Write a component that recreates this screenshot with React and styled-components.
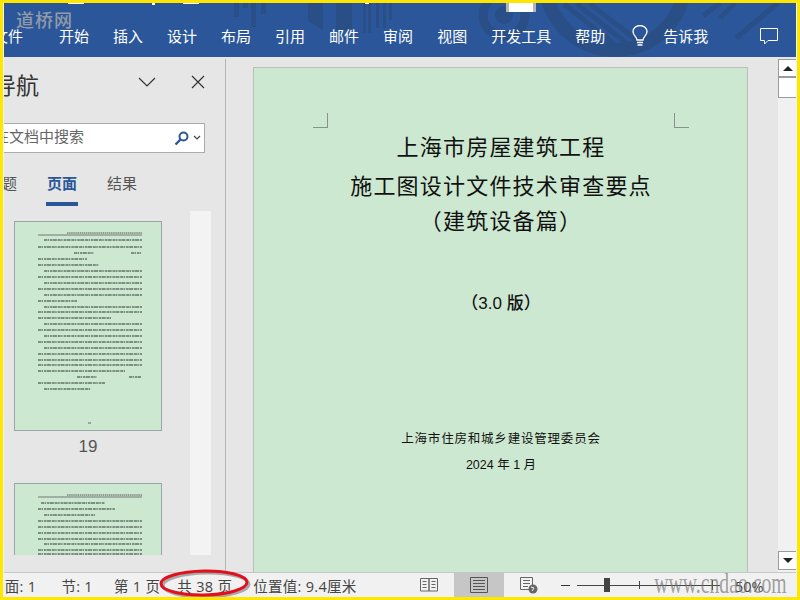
import React from 'react';
import styled, { createGlobalStyle } from 'styled-components';

const CJK = '"Noto Sans CJK SC", "Liberation Sans", sans-serif';
const UI = '"Liberation Sans", "Noto Sans CJK SC", sans-serif';
const STATUS = '"Open Sans", "Noto Sans CJK SC", sans-serif';

const GlobalStyle = createGlobalStyle`
  html, body { margin: 0; padding: 0; background: #ffe600; }
  * { box-sizing: border-box; }
`;

const Frame = styled.div`
  width: 800px;
  height: 600px;
  padding: 3px;
  background: #ffe600;
  font-family: ${CJK};
`;

const Win = styled.div`
  position: relative;
  height: 594px;
  display: flex;
  flex-direction: column;
  overflow: hidden;
  background: #e6e6e6;
  border-left: 1px solid #f4f4f4;
  border-right: 1px solid #f4f4f4;
`;

const Ribbon = styled.header`
  position: relative;
  height: 54px;
  flex: none;
  background: #2b579a;
  color: #fff;
`;

const RibbonArt = styled.svg`
  position: absolute;
  left: -4px;
  top: -3px;
`;

const TitleStrip = styled.div`
  position: relative;
  height: 9px;
  display: flex;
  align-items: flex-start;
`;

const TitleBit = styled.span`
  flex: none;
  width: ${p => p.$w}px;
  height: ${p => p.$h}px;
  margin-left: ${p => p.$ml}px;
  background: #fff;
  ${p => p.$edge && 'border-left: 3px solid #b5b5b5; border-right: 3px solid #b5b5b5;'}
`;

const Stamp = styled.div`
  position: absolute;
  left: 12px;
  top: 5px;
  font-size: 18px;
  font-weight: 500;
  line-height: 22px;
  letter-spacing: 1px;
  color: #929aa8;
`;

const Tabs = styled.nav`
  position: relative;
  margin-top: 13px;
  height: 22px;
  display: flex;
  align-items: center;
  gap: 24px;
  padding-right: 18px;
`;

const Tab = styled.span`
  flex: none;
  font-size: 15px;
  line-height: 22px;
  white-space: nowrap;
  color: #fff;
`;

const FileTab = styled(Tab)`
  margin-left: -11px;
  margin-right: 12px;
`;

const Bulb = styled.svg`
  flex: none;
  margin-left: 3px;
  margin-right: -9px;
`;

const Comment = styled.svg`
  flex: none;
  margin-left: auto;
`;

const Body = styled.main`
  flex: 1;
  min-height: 0;
  display: flex;
`;

const NavPane = styled.aside`
  width: 221px;
  flex: none;
  display: flex;
  flex-direction: column;
  overflow: hidden;
`;

const NavHead = styled.div`
  height: 54px;
  padding: 0 20px 0 0;
  display: flex;
  align-items: center;
`;

const NavTitle = styled.h2`
  margin: 0 0 0 -11px;
  font-size: 23px;
  font-weight: 400;
  line-height: 32px;
  color: #333;
  white-space: nowrap;
`;

const NavBtn = styled.svg`
  flex: none;
  margin-left: ${p => p.$ml};
  margin-bottom: 4px;
`;

const Search = styled.div`
  margin: 12px 20px 0 -1px;
  height: 30px;
  flex: none;
  display: flex;
  align-items: center;
  background: #fff;
  border: 1px solid #ababab;
  border-left: 0;
`;

const SearchText = styled.span`
  margin-left: -9px;
  padding-bottom: 5px;
  font-size: 15px;
  line-height: 20px;
  color: #666;
  white-space: nowrap;
`;

const SearchIcons = styled.div`
  margin-left: auto;
  padding-right: 3px;
  display: flex;
  align-items: center;
  gap: 4px;
`;

const NavTabs = styled.div`
  margin-top: 21px;
  height: 32px;
  flex: none;
  display: flex;
  gap: 28px;
`;

const NavTab = styled.span`
  flex: none;
  height: 32px;
  padding: 0 1px;
  font-size: 15px;
  line-height: 17px;
  font-weight: ${p => (p.$on ? 700 : 400)};
  color: ${p => (p.$on ? '#2b579a' : '#555')};
  border-bottom: 4px solid ${p => (p.$on ? '#2b579a' : 'transparent')};
  white-space: nowrap;
  &:first-child { margin-left: -18px; }
`;

const ThumbPane = styled.div`
  margin-top: 5px;
  height: 344px;
  flex: none;
  display: flex;
  overflow: hidden;
`;

const ThumbList = styled.div`
  width: 186px;
  flex: none;
  padding: 10px 0 0 10px;
`;

const ThumbTrack = styled.div`
  width: 21px;
  flex: none;
  background: #f3f3f3;
`;

const Thumb = styled.svg`
  display: block;
  width: 148px;
  height: 210px;
  background: #cde8d0;
  border: 1px solid #9aa5a8;
`;

const ThumbNum = styled.div`
  width: 148px;
  height: 52px;
  padding-top: 6px;
  text-align: center;
  font-family: ${UI};
  font-size: 17px;
  line-height: 20px;
  color: #555;
`;

const Divider = styled.div`
  width: 1px;
  flex: none;
  margin-top: 2px;
  background: #b5b5b5;
`;

const DocArea = styled.section`
  flex: 1;
  min-width: 0;
  padding: 10px 30px 0 27px;
  overflow: hidden;
`;

const Page = styled.article`
  height: 540px;
  padding: 45px 58px 0 59px;
  display: flex;
  flex-direction: column;
  align-items: center;
  background: #cde8d0;
  border: 1px solid #b8bfb8;
  border-bottom: 0;
  color: #111;
`;

const Marks = styled.div`
  width: 100%;
  display: flex;
  justify-content: space-between;
`;

const Mark = styled.i`
  display: block;
  width: 15px;
  height: 15px;
  border-bottom: 1px solid #87928a;
  ${p => (p.$right ? 'border-left' : 'border-right')}: 1px solid #87928a;
`;

const Heading = styled.h1`
  margin: ${p => p.$mt}px 0 0;
  font-size: 22px;
  font-weight: 400;
  line-height: 30px;
  letter-spacing: 1.2px;
  white-space: nowrap;
`;

const Version = styled.div`
  margin-top: 58px;
  font-size: 17px;
  font-weight: 500;
  line-height: 24px;
  font-family: ${UI};
  white-space: nowrap;
`;

const Org = styled.div`
  margin-top: ${p => p.$mt}px;
  font-size: 12.5px;
  line-height: 20px;
  letter-spacing: ${p => p.$ls}px;
  font-family: ${UI};
  white-space: nowrap;
`;

const Scroll = styled.div`
  width: 18px;
  flex: none;
  margin-top: 2px;
  display: flex;
  flex-direction: column;
  background: #f1f1f1;
`;

const ScrollBtn = styled.div`
  width: 18px;
  height: ${p => p.$h}px;
  flex: none;
  display: flex;
  align-items: center;
  justify-content: center;
  background: #fff;
  border: 1px solid #9b9b9b;
  border-right: 0;
  ${p => p.$end && 'margin-top: auto; margin-bottom: 2px;'}
`;

const Arrow = styled.i`
  width: 0;
  height: 0;
  border-left: 5px solid transparent;
  border-right: 5px solid transparent;
  ${p => (p.$down ? 'border-top' : 'border-bottom')}: 5px solid #222;
`;

const ScrollThumb = styled.div`
  height: 21px;
  flex: none;
  background: #fff;
  border: 1px solid #9b9b9b;
  border-right: 0;
`;

const Status = styled.footer`
  position: relative;
  height: 25px;
  flex: none;
  display: flex;
  align-items: center;
  background: #f1f1f1;
  border-top: 1px solid #c6c6c6;
  font-family: ${STATUS};
  font-size: 14.5px;
  line-height: 20px;
  color: #444;
`;

const Info = styled.span`
  position: relative;
  flex: none;
  margin-left: ${p => p.$ml}px;
  padding-top: 3px;
  letter-spacing: 0.3px;
  white-space: nowrap;
`;

const RedRing = styled.svg`
  position: absolute;
  left: -19px;
  top: -6px;
  overflow: visible;
`;

const StatusRight = styled.div`
  margin-left: auto;
  height: 100%;
  padding-right: 31px;
  display: flex;
  align-items: center;
`;

const ViewBtn = styled.div`
  width: 50px;
  height: 100%;
  display: flex;
  align-items: center;
  justify-content: center;
  background: ${p => (p.$on ? '#c6c6c6' : 'transparent')};
`;

const Minus = styled.i`
  width: 9px;
  height: 1px;
  margin-left: 7px;
  background: #333;
`;

const Slider = styled.div`
  position: relative;
  width: 143px;
  height: 1px;
  margin-left: 7px;
  background: #444;
`;

const SliderThumb = styled.i`
  position: absolute;
  left: 27px;
  top: -7px;
  width: 6px;
  height: 14px;
  background: #444;
`;

const SliderTick = styled.i`
  position: absolute;
  left: ${p => p.$x}px;
  top: ${p => -p.$h / 2}px;
  width: 1px;
  height: ${p => p.$h}px;
  background: #444;
`;

const Percent = styled.span`
  width: 30px;
  margin-left: 15px;
  padding-top: 3px;
  white-space: nowrap;
`;

const Watermark = styled.div`
  position: absolute;
  right: 9px;
  bottom: 0;
  font-family: "Liberation Serif", serif;
  font-size: 29px;
  line-height: 28px;
  color: rgba(110, 110, 110, 0.65);
  transform: scaleX(0.68);
  transform-origin: right center;
  white-space: nowrap;
`;

const tabs = ['开始', '插入', '设计', '布局', '引用', '邮件', '审阅', '视图', '开发工具', '帮助'];

// y, x1, x2 of the small text lines on each thumbnail
const page19 = [
  [18, 29, 127], [25, 23, 127], [31, 59, 79], [31, 116, 126], [37, 23, 72], [43, 23, 84],
  [49, 29, 127], [55, 23, 127], [61, 29, 127], [67, 23, 127], [73, 29, 127], [79, 23, 62],
  [85, 29, 127], [90, 23, 127], [96, 23, 96], [102, 29, 127], [108, 23, 127], [114, 29, 127],
  [120, 23, 127], [126, 29, 127], [132, 23, 127], [138, 23, 127], [143, 23, 127], [149, 23, 110],
  [155, 62, 82], [155, 114, 126], [161, 23, 90], [167, 29, 76],
];

const page20 = [
  [19, 26, 90], [25, 23, 100], [31, 29, 80], [37, 23, 127], [43, 23, 127], [49, 23, 127],
  [55, 23, 127], [60, 29, 127], [66, 23, 127], [70, 23, 127],
];

const MiniPage = ({ lines, footer }) => (
  <Thumb viewBox="0 0 146 208">
    <line x1="52" x2="127" y1="11" y2="11" stroke="#555" strokeWidth="1" strokeDasharray="1.5 .6" />
    <line x1="23" x2="127" y1="13" y2="13" stroke="#777" strokeWidth="1" />
    {lines.map(([y, a, b], i) => (
      <line
        key={i}
        x1={a}
        x2={b}
        y1={y}
        y2={y}
        stroke="#46554c"
        strokeOpacity=".8"
        strokeWidth="1.3"
        strokeDasharray="3 .5 1.500 .9 2.500 .5 4 .8"
      />
    ))}
    {footer && <line x1="73" x2="76" y1="201" y2="201" stroke="#666" />}
  </Thumb>
);

export default function App() {
  return (
    <Frame>
      <GlobalStyle />
      <Win>
        <Ribbon>
          <RibbonArt width="800" height="60" viewBox="0 0 800 60" fill="#2a4e86">
            <rect x="234" y="3" width="5" height="14" />
            <rect x="243" y="3" width="5" height="5" />
            <rect x="251" y="3" width="5" height="24" />
            <rect x="261" y="3" width="5" height="11" />
            <polygon points="308,3 323,3 323,30 308,21" />
            <rect x="336" y="3" width="16" height="27" />
            <rect x="363" y="3" width="3" height="30" />
            <rect x="368" y="3" width="3" height="30" />
            <rect x="376" y="3" width="3" height="25" />
            <rect x="383" y="3" width="3" height="25" />
            <rect x="389" y="3" width="3" height="17" />
            <circle cx="504" cy="15" r="21" fill="none" stroke="#2a4e86" strokeWidth="9" />
            <circle cx="504" cy="15" r="9" />
            <circle cx="615" cy="-20" r="70" fill="none" stroke="#2a4e86" strokeWidth="14" />
            <g stroke="#2a4e86" strokeWidth="5">
              <line x1="564" y1="4" x2="622" y2="50" />
              <line x1="577" y1="4" x2="630" y2="46" />
              <line x1="590" y1="4" x2="642" y2="44" />
              <line x1="703" y1="16" x2="720" y2="3" />
              <line x1="720" y1="18" x2="735" y2="3" />
              <line x1="736" y1="38" x2="778" y2="3" />
            </g>
          </RibbonArt>
          <TitleStrip>
            <TitleBit $w={16} $h={1} $ml={64} />
            <TitleBit $w={3} $h={2} $ml={68} />
            <TitleBit $w={16} $h={1} $ml={28} />
            <TitleBit $w={4} $h={1} $ml={166} />
            <TitleBit $w={30} $h={9} $ml={137} $edge />
          </TitleStrip>
          <Stamp>道桥网</Stamp>
          <Tabs>
            <FileTab>文件</FileTab>
            {tabs.map(t => <Tab key={t}>{t}</Tab>)}
            <Bulb width="16" height="22" viewBox="0 0 16 22" fill="none" stroke="#fff" strokeWidth="1.3">
              <path d="M5 15c0-3-4-4.500-4-8.500a7 6 0 0 1 14 0c0 4-4 5.500-4 8.500z" />
              <path d="M5 17.500h6M5.500 20h5" strokeWidth="1.600" />
            </Bulb>
            <Tab>告诉我</Tab>
            <Comment width="18" height="17" viewBox="0 0 18 17" fill="none" stroke="#fff" strokeWidth="1">
              <path d="M.5.500h17v12H8l-3.500 3.500v-3.500h-4z" />
            </Comment>
          </Tabs>
        </Ribbon>

        <Body>
          <NavPane>
            <NavHead>
              <NavTitle>导航</NavTitle>
              <NavBtn $ml="auto" width="18" height="11" viewBox="0 0 18 11" fill="none" stroke="#333" strokeWidth="1.200">
                <path d="M1 1l8 8 8-8" />
              </NavBtn>
              <NavBtn $ml="35px" width="14" height="14" viewBox="0 0 14 14" fill="none" stroke="#333" strokeWidth="1.200">
                <path d="M1 1l12 12M13 1L1 13" />
              </NavBtn>
            </NavHead>
            <Search>
              <SearchText>在文档中搜索</SearchText>
              <SearchIcons>
                <svg width="15" height="15" viewBox="0 0 15 15" fill="none" stroke="#2b579a">
                  <circle cx="9.500" cy="5.500" r="4" strokeWidth="2" />
                  <path d="M6.500 8.500L1.500 13.500" strokeWidth="2.400" />
                </svg>
                <svg width="8" height="6" viewBox="0 0 8 6" fill="none" stroke="#444" strokeWidth="1.200">
                  <path d="M1 1l3 3 3-3" />
                </svg>
              </SearchIcons>
            </Search>
            <NavTabs>
              <NavTab>标题</NavTab>
              <NavTab $on>页面</NavTab>
              <NavTab>结果</NavTab>
            </NavTabs>
            <ThumbPane>
              <ThumbList>
                <MiniPage lines={page19} footer />
                <ThumbNum>19</ThumbNum>
                <MiniPage lines={page20} />
              </ThumbList>
              <ThumbTrack />
            </ThumbPane>
          </NavPane>
          <Divider />
          <DocArea>
            <Page>
              <Marks>
                <Mark />
                <Mark $right />
              </Marks>
              <Heading $mt={2}>上海市房屋建筑工程</Heading>
              <Heading $mt={9}>施工图设计文件技术审查要点</Heading>
              <Heading $mt={5}>（建筑设备篇）</Heading>
              <Version>（3.0 版）</Version>
              <Org $mt={113} $ls={0.8}>上海市住房和城乡建设管理委员会</Org>
              <Org $mt={6} $ls={0}>2024 年 1 月</Org>
            </Page>
          </DocArea>
          <Scroll>
            <ScrollBtn $h={18}><Arrow /></ScrollBtn>
            <ScrollThumb />
            <ScrollBtn $h={19} $end><Arrow $down /></ScrollBtn>
          </Scroll>
        </Body>

        <Status>
          <Info $ml={-14}>页面: 1</Info>
          <Info $ml={25}>节: 1</Info>
          <Info $ml={21}>第 1 页</Info>
          <Info $ml={17}>
            共 38 页
            <RedRing width="92" height="30" viewBox="0 0 92 30" fill="none">
              <ellipse cx="46" cy="15" rx="43" ry="12" transform="rotate(-1 46 15) translate(2 2)" stroke="#000" strokeOpacity=".3" strokeWidth="3" />
              <ellipse cx="46" cy="15" rx="43" ry="12" transform="rotate(-1 46 15)" stroke="#e2101c" strokeWidth="3" />
            </RedRing>
          </Info>
          <Info $ml={21}>位置值: 9.4厘米</Info>
          <StatusRight>
            <ViewBtn>
              <svg width="18" height="16" viewBox="0 0 18 16" fill="none" stroke="#666">
                <path d="M.5 1.500h8.500v12.500H.5zM9 1.500h8.500v12.500H9zM2.500 4.500h4M2.500 7.500h4M2.500 10.500h4M11.500 4.500h4M11.500 7.500h4M11.500 10.500h4" />
              </svg>
            </ViewBtn>
            <ViewBtn $on>
              <svg width="18" height="16" viewBox="0 0 18 16" fill="none" stroke="#555">
                <path d="M.5.500h17v15H.5zM3 3.500h12M3 6.500h12M3 9.500h12M3 12.500h12" />
              </svg>
            </ViewBtn>
            <ViewBtn>
              <svg width="18" height="17" viewBox="0 0 18 17" fill="none" stroke="#666">
                <path d="M11.500 12.500H.5V.5h12v8M3 3.500h7M3 6.500h7M3 9.500h5" />
                <circle cx="13" cy="12" r="4.500" fill="#666" stroke="none" />
                <path d="M11 10l3 1-2 3" stroke="#f1f1f1" />
              </svg>
            </ViewBtn>
            <Minus />
            <Slider>
              <SliderThumb />
              <SliderTick $x={62} $h={8} />
              <SliderTick $x={135} $h={10} />
            </Slider>
            <Percent>50%</Percent>
          </StatusRight>
        </Status>
        <Watermark>www.cndao.com</Watermark>
      </Win>
    </Frame>
  );
}
